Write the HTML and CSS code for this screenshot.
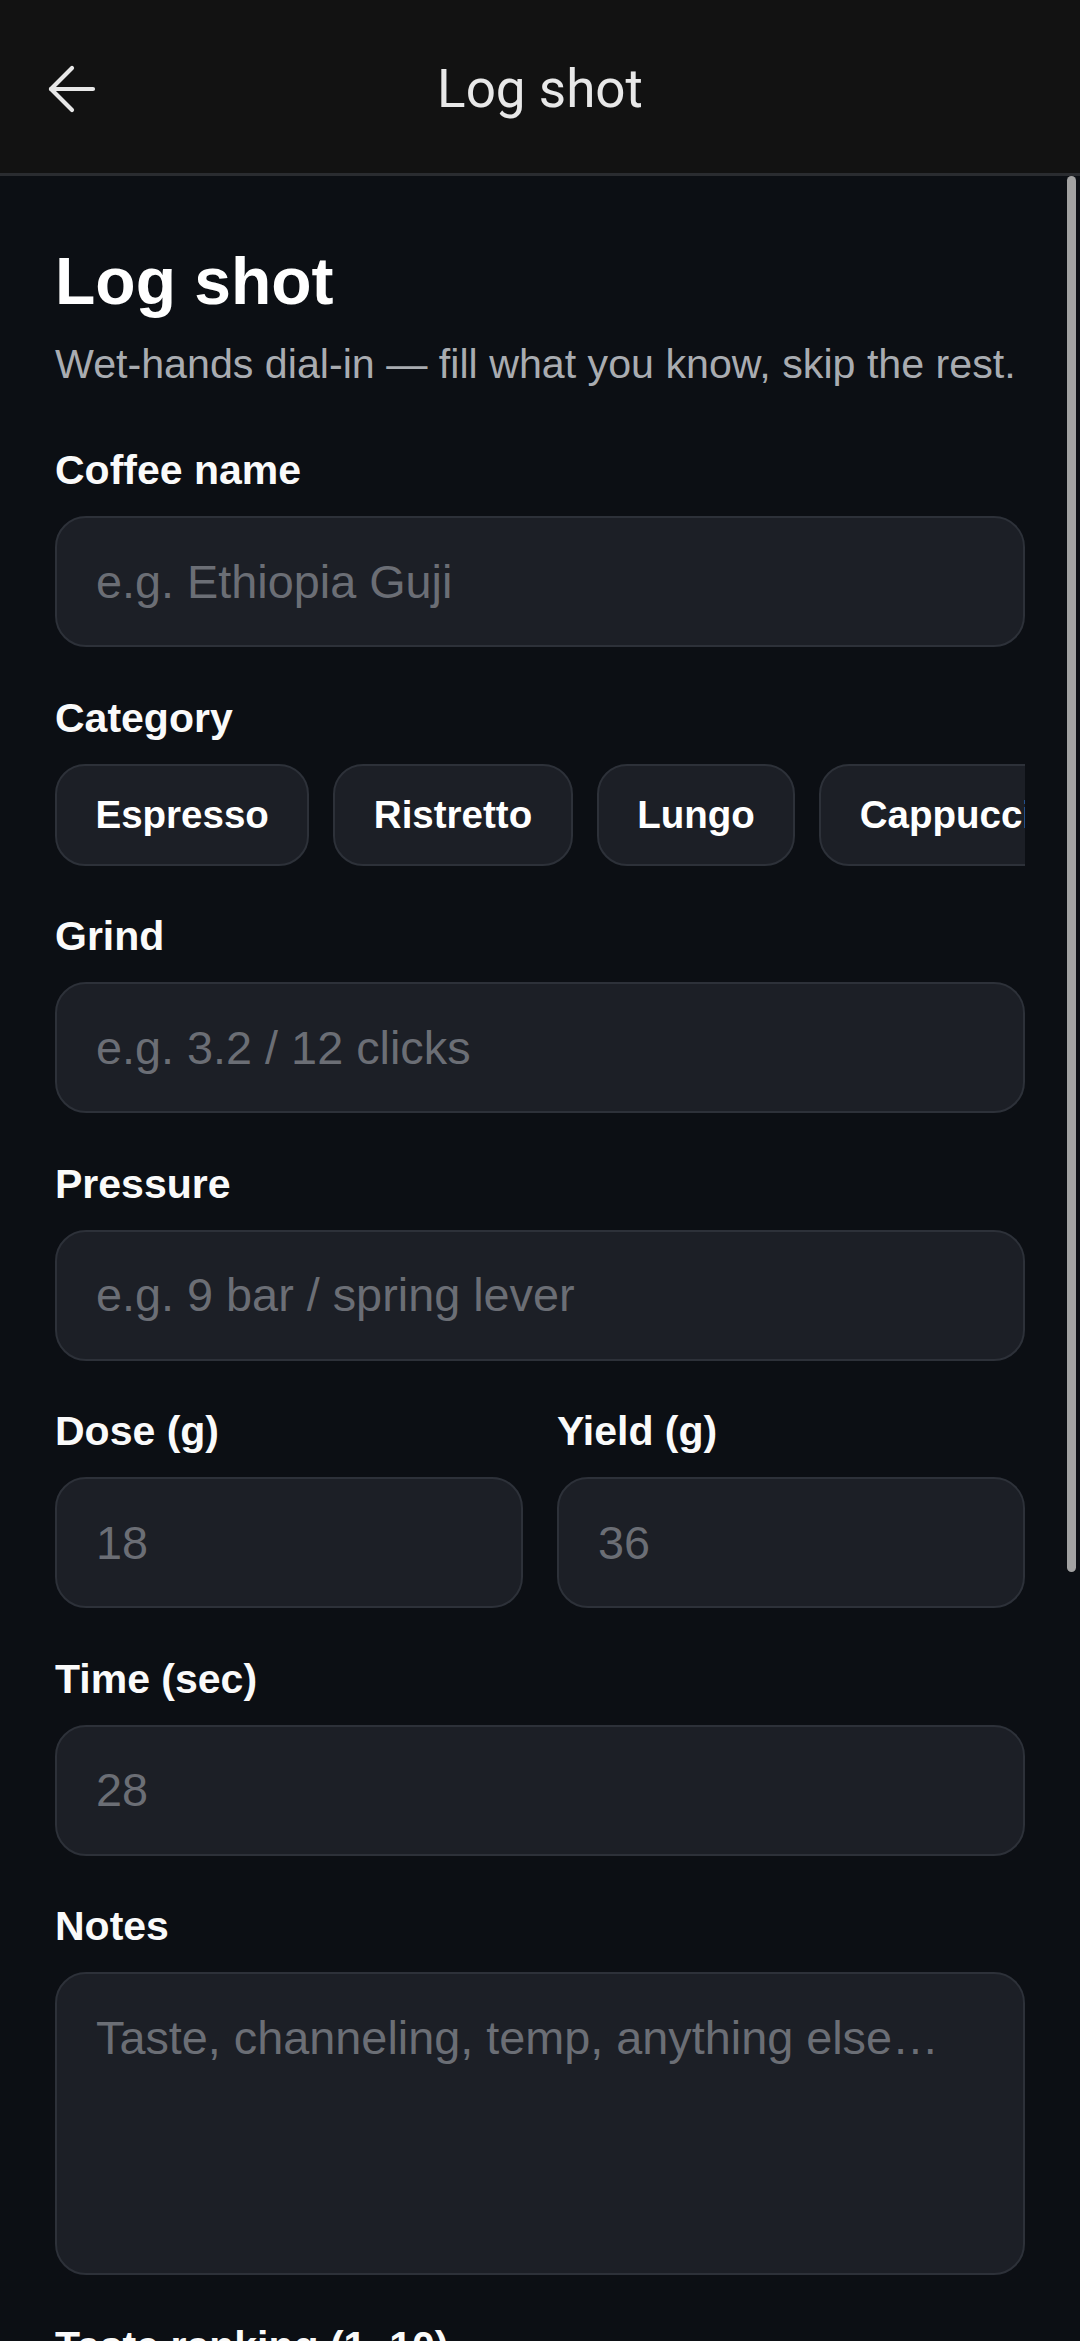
FILE: index.html
```html
<!DOCTYPE html>
<html lang="en">
<head>
    <meta charset="UTF-8">
    <title>Log shot</title>
    <link rel="stylesheet" href="styles.css">
</head>
<body>
    <div class="screen">
        <header class="app-bar">
            <button class="back-button" aria-label="Back">
                <svg width="48" height="48" viewBox="0 0 48 48" fill="none" stroke="currentColor" stroke-width="4.2" stroke-linecap="round" stroke-linejoin="round">
                    <path d="M3 24H45"/>
                    <path d="M24 3L3 24L24 45"/>
                </svg>
            </button>
            <h1 class="app-bar-title">Log shot</h1>
        </header>

        <main class="content">
            <div class="scroll-thumb"></div>

            <h2 class="page-title">Log shot</h2>
            <p class="page-sub">Wet-hands dial-in — fill what you know, skip the rest.</p>

            <form class="shot-form">
                <div class="field">
                    <label class="field-label" for="coffee">Coffee name</label>
                    <input class="text-input" id="coffee" type="text" placeholder="e.g. Ethiopia Guji">
                </div>

                <div class="field">
                    <span class="field-label">Category</span>
                    <div class="chips">
                        <button type="button" class="chip">Espresso</button>
                        <button type="button" class="chip">Ristretto</button>
                        <button type="button" class="chip">Lungo</button>
                        <button type="button" class="chip">Cappuccino</button>
                        <button type="button" class="chip">Flat white</button>
                    </div>
                </div>

                <div class="field">
                    <label class="field-label" for="grind">Grind</label>
                    <input class="text-input" id="grind" type="text" placeholder="e.g. 3.2 / 12 clicks">
                </div>

                <div class="field">
                    <label class="field-label" for="pressure">Pressure</label>
                    <input class="text-input" id="pressure" type="text" placeholder="e.g. 9 bar / spring lever">
                </div>

                <div class="field-row">
                    <div class="field">
                        <label class="field-label" for="dose">Dose (g)</label>
                        <input class="text-input" id="dose" type="text" inputmode="decimal" placeholder="18">
                    </div>
                    <div class="field">
                        <label class="field-label" for="yield">Yield (g)</label>
                        <input class="text-input" id="yield" type="text" inputmode="decimal" placeholder="36">
                    </div>
                </div>

                <div class="field">
                    <label class="field-label" for="time">Time (sec)</label>
                    <input class="text-input" id="time" type="text" inputmode="numeric" placeholder="28">
                </div>

                <div class="field">
                    <label class="field-label" for="notes">Notes</label>
                    <textarea class="text-input notes-input" id="notes" placeholder="Taste, channeling, temp, anything else…"></textarea>
                </div>

                <div class="field">
                    <span class="field-label">Taste ranking (1–10)</span>
                </div>
            </form>
        </main>
    </div>
</body>
</html>
```

FILE: styles.css
```css
* {
    box-sizing: border-box;
}
html, body {
    margin: 0;
    height: 100%;
}
body {
    background: #0c0f14;
    color: #f5f5f5;
    font-family: "Liberation Sans", Arial, sans-serif;
    overflow: hidden;
}
.screen {
    display: flex;
    flex-direction: column;
    height: 100vh;
}

/* top bar */
.app-bar {
    display: grid;
    grid-template-columns: 1fr auto 1fr;
    align-items: center;
    height: 176px;
    padding-top: 4px;
    background: #121212;
    border-bottom: 3px solid #2a2c30;
    flex: none;
}
.back-button {
    justify-self: start;
    display: flex;
    margin-left: 48px;
    padding: 0;
    border: none;
    background: transparent;
    color: #e8e8e8;
    cursor: pointer;
}
.app-bar-title {
    margin: 0;
    font-family: Roboto, "Noto Sans", sans-serif;
    font-weight: 400;
    font-size: 53px;
    color: #e8e8e8;
}

/* scroll area */
.content {
    position: relative;
    flex: 1;
    overflow: hidden;
    padding: 66px 55px 0;
}
.scroll-thumb {
    position: absolute;
    top: 0;
    right: 4px;
    width: 9px;
    height: 1396px;
    border-radius: 5px;
    background: #a2a2a2;
}
.page-title {
    margin: 0;
    font-size: 66px;
    line-height: 78px;
    font-weight: 700;
    color: #fff;
}
.page-sub {
    margin: 16px 0 53px;
    font-size: 41.2px;
    line-height: 57px;
    color: #a9acb1;
}

/* form */
.field {
    margin-bottom: 46.5px;
}
.field-label {
    display: block;
    margin-bottom: 22px;
    font-size: 41px;
    line-height: 48px;
    font-weight: 700;
    color: #fafafa;
}
.field-row {
    display: grid;
    grid-template-columns: 1fr 1fr;
    column-gap: 34px;
}
.text-input {
    display: block;
    width: 100%;
    height: 131px;
    padding: 0 39px;
    border: 2px solid #2d3139;
    border-radius: 31px;
    background: #1c1f26;
    color: #f5f5f5;
    font-family: "Liberation Sans", Arial, sans-serif;
    font-size: 46.8px;
    outline: none;
}
.text-input::placeholder {
    color: #6b6e75;
}
.notes-input {
    height: 303px;
    padding: 37px 39px;
    line-height: 55px;
    resize: none;
}
.chips {
    display: flex;
    gap: 24px;
    overflow: hidden;
}
.chip {
    flex: none;
    height: 102px;
    padding: 0 38.5px;
    border: 2px solid #2d3139;
    border-radius: 30px;
    background: #1c1f26;
    color: #fff;
    font-family: "Liberation Sans", Arial, sans-serif;
    font-size: 38.5px;
    font-weight: 700;
    cursor: pointer;
}
```
